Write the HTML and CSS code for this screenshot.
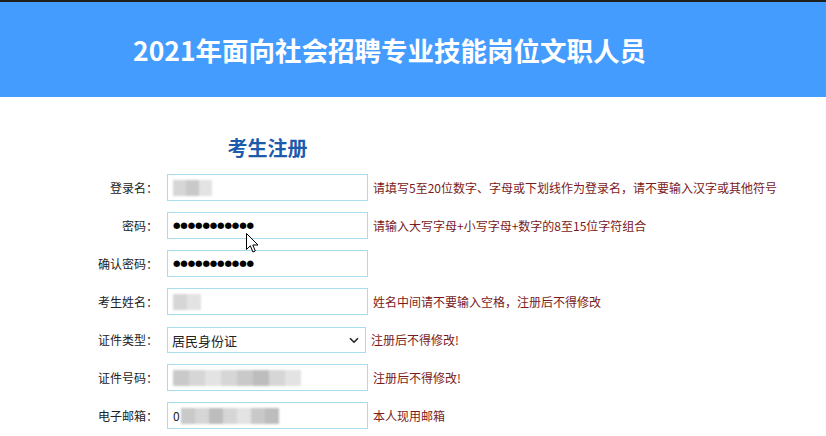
FILE: index.html
```html
<!DOCTYPE html>
<html lang="zh-CN">
<head>
<meta charset="utf-8">
<title>考生注册</title>
<link rel="stylesheet" href="styles.css">
</head>
<body>
<div class="topline"></div>
<header class="banner">
  <h1 class="banner-title">2021年面向社会招聘专业技能岗位文职人员</h1>
</header>
<main class="page">
  <form class="reg">
    <div class="reg-title">考生注册</div>

    <label class="lbl">登录名：</label>
    <div class="field"><span class="blur blur-login"><i class="c1"></i><i class="c2"></i><i class="c3"></i></span></div>
    <span class="hint">请填写5至20位数字、字母或下划线作为登录名，请不要输入汉字或其他符号</span>

    <label class="lbl">密码：</label>
    <div class="field"><span class="dots">●●●●●●●●●●●</span></div>
    <span class="hint">请输入大写字母+小写字母+数字的8至15位字符组合</span>

    <label class="lbl">确认密码：</label>
    <div class="field"><span class="dots">●●●●●●●●●●●</span></div>
    <span class="hint"></span>

    <label class="lbl">考生姓名：</label>
    <div class="field"><span class="blur blur-name"><i class="c1"></i><i class="c3"></i></span></div>
    <span class="hint">姓名中间请不要输入空格，注册后不得修改</span>

    <label class="lbl">证件类型：</label>
    <div class="select-wrap">
      <select class="sel"><option>居民身份证</option></select>
      <svg class="chev" width="10" height="7" viewBox="0 0 10 7"><path d="M1 1.2 L5 5.2 L9 1.2" fill="none" stroke="#222" stroke-width="1.6"/></svg>
    </div>
    <span class="hint hint-sel">注册后不得修改!</span>

    <label class="lbl">证件号码：</label>
    <div class="field"><span class="blur blur-id"><i class="c2"></i><i class="c1"></i><i class="c3"></i><i class="c1"></i><i class="c2"></i><i class="c4"></i><i class="c1"></i><i class="c3"></i></span></div>
    <span class="hint">注册后不得修改!</span>

    <label class="lbl">电子邮箱：</label>
    <div class="field"><span class="zero">0</span><span class="blur blur-mail"><i class="c2"></i><i class="c1"></i><i class="c4"></i><i class="c1"></i><i class="c3"></i><i class="c2"></i><i class="c4"></i></span></div>
    <span class="hint">本人现用邮箱</span>
  </form>
  <svg class="cursor" width="13" height="21" viewBox="0 0 13 21"><path d="M0.5 0.5 L0.5 16.5 L4.3 12.8 L6.9 19 L9.3 18 L6.8 12 L12 12 Z" fill="#fff" stroke="#000" stroke-width="1" stroke-linejoin="round"/></svg>
</main>
</body>
</html>
```
FILE: styles.css
```css
html, body {
  margin: 0;
  padding: 0;
  background: #fff;
  font-family: "Noto Sans CJK SC", "Liberation Sans", sans-serif;
}

.topline {
  height: 2px;
  background: #1f1f1f;
}

.banner {
  height: 95px;
  background: #449dfe;
  display: flex;
  align-items: center;
  padding-left: 133px;
  padding-top: 2px;
  box-sizing: border-box;
}

.banner-title {
  margin: 0;
  color: #fff;
  font-size: 26.5px;
  font-weight: 700;
  letter-spacing: 0;
  line-height: 1;
}

.page {
  position: relative;
}

.reg {
  display: grid;
  grid-template-columns: 160px 208px auto;
  grid-template-rows: 29px;
  grid-auto-rows: 27px;
  row-gap: 11px;
  align-items: center;
  padding-top: 37px;
}

.reg-title {
  grid-column: 2;
  justify-self: center;
  font-size: 20px;
  font-weight: 700;
  color: #1d5cad;
  line-height: 28px;
  height: 28px;
  margin-left: 7px;
  align-self: start;
}

.lbl {
  grid-column: 1;
  text-align: right;
  font-size: 12px;
  color: #222;
  padding-right: 2px;
}

.field {
  grid-column: 2;
  margin-left: 7px;
  height: 27px;
  box-sizing: border-box;
  border: 1px solid #a9dcec;
  display: flex;
  align-items: center;
  padding-left: 5px;
  background: #fff;
}

.hint {
  grid-column: 3;
  font-size: 12px;
  color: #7b1a1a;
  margin-left: 5px;
}

.hint-sel {
  margin-left: 3px;
}

.dots {
  font-family: "DejaVu Sans", sans-serif;
  font-size: 8.6px;
  letter-spacing: -0.15px;
  color: #000;
  line-height: 1;
}

.blur {
  display: flex;
  height: 16px;
  filter: blur(1.3px);
}

.blur i {
  display: block;
  height: 100%;
  width: 12px;
}

.blur .c1 { background: #d6d6d6; }
.blur .c2 { background: #c9c9c9; }
.blur .c3 { background: #e3e3e3; }
.blur .c4 { background: #bdbdbd; }

.blur-login i { width: 13px; }
.blur-name i { width: 14px; }
.blur-id i { width: 16px; }
.blur-mail i { width: 14px; }

.zero {
  font-size: 12px;
  color: #222;
  margin-right: 1px;
}

.select-wrap {
  grid-column: 2;
  margin-left: 7px;
  position: relative;
  width: 199px;
  height: 26px;
}

.sel {
  appearance: none;
  -webkit-appearance: none;
  width: 199px;
  height: 26px;
  box-sizing: border-box;
  border: 1px solid #a9dcec;
  border-radius: 0;
  background: #fff;
  font-family: "Noto Sans CJK SC", sans-serif;
  font-size: 13px;
  color: #222;
  padding: 0 0 0 4px;
  margin: 0;
  outline: none;
}

.chev {
  position: absolute;
  right: 7px;
  top: 10px;
}

.cursor {
  position: absolute;
  left: 246px;
  top: 136px;
}
```
